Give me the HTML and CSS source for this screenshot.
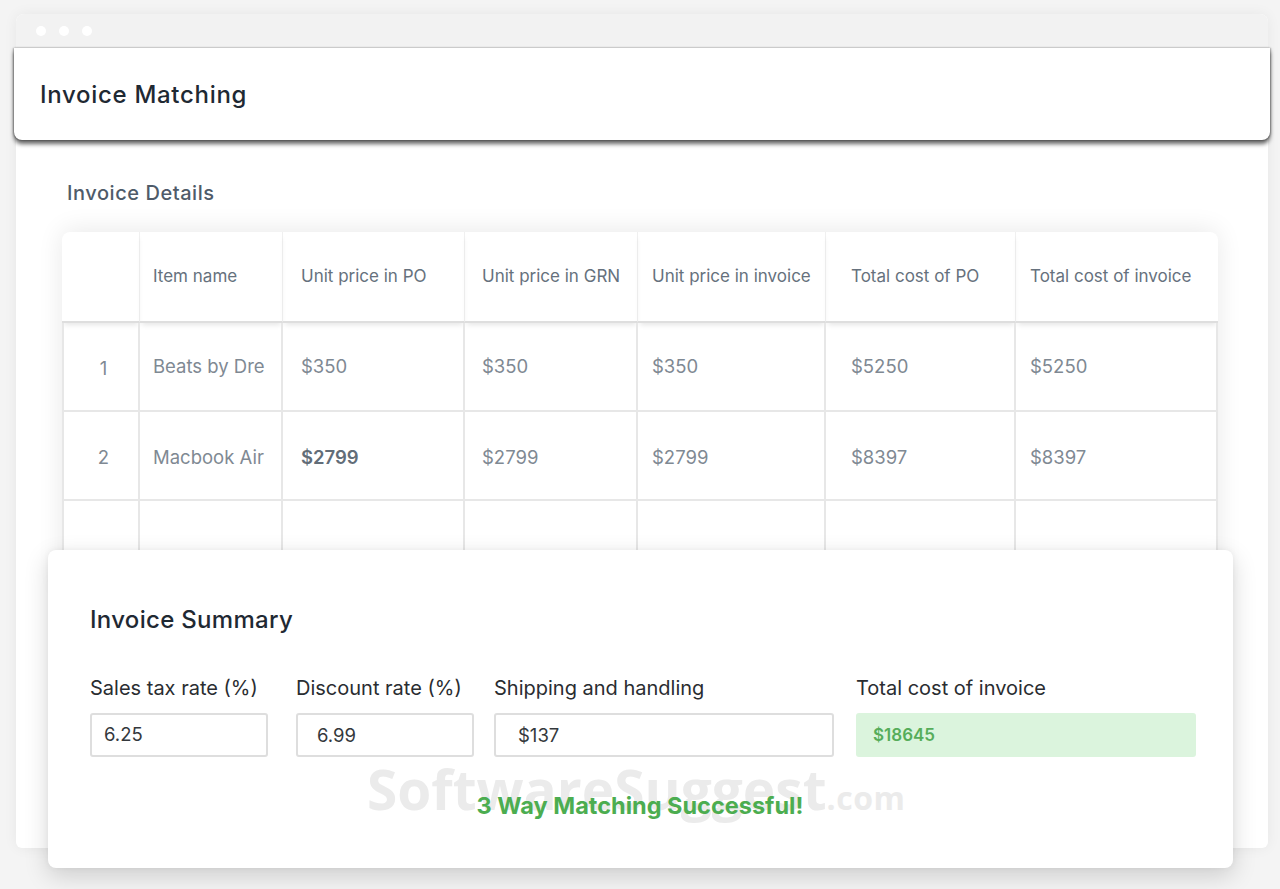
FILE: index.html
```html
<!DOCTYPE html>
<html lang="en">
<head>
<meta charset="utf-8">
<title>Invoice Matching</title>
<link rel="stylesheet" href="styles.css">
</head>
<body>
<div class="window">
  <div class="titlebar">
    <span class="dot"></span><span class="dot"></span><span class="dot"></span>
  </div>
  <header class="app-header">
    <h1 class="app-title">Invoice Matching</h1>
  </header>
  <main class="content">
    <h2 class="section-title">Invoice Details</h2>
    <div class="table-card">
      <table class="items">
        <colgroup>
          <col class="c-num"><col class="c-name"><col class="c-po"><col class="c-grn"><col class="c-inv"><col class="c-tpo"><col class="c-tinv">
        </colgroup>
        <thead>
          <tr>
            <th></th>
            <th>Item name</th>
            <th>Unit price in PO</th>
            <th>Unit price in GRN</th>
            <th>Unit price in invoice</th>
            <th>Total cost of PO</th>
            <th>Total cost of invoice</th>
          </tr>
        </thead>
        <tbody>
          <tr>
            <td>1</td>
            <td>Beats by Dre</td>
            <td>$350</td>
            <td>$350</td>
            <td>$350</td>
            <td>$5250</td>
            <td>$5250</td>
          </tr>
          <tr>
            <td>2</td>
            <td>Macbook Air</td>
            <td class="strong">$2799</td>
            <td>$2799</td>
            <td>$2799</td>
            <td>$8397</td>
            <td>$8397</td>
          </tr>
          <tr>
            <td></td><td></td><td></td><td></td><td></td><td></td><td></td>
          </tr>
        </tbody>
      </table>
    </div>
    <section class="summary-card">
      <h2 class="summary-title">Invoice Summary</h2>
      <div class="fields">
        <div class="field">
          <div class="field-label">Sales tax rate (%)</div>
          <div class="field-box box-tax">6.25</div>
        </div>
        <div class="field">
          <div class="field-label">Discount rate (%)</div>
          <div class="field-box box-disc">6.99</div>
        </div>
        <div class="field">
          <div class="field-label">Shipping and handling</div>
          <div class="field-box box-ship">$137</div>
        </div>
        <div class="field">
          <div class="field-label">Total cost of invoice</div>
          <div class="field-box box-total">$18645</div>
        </div>
      </div>
      <p class="success">3 Way Matching Successful!</p>
      <div class="watermark" aria-hidden="true">SoftwareSuggest<span class="wm-com">.com</span></div>
    </section>
  </main>
</div>
</body>
</html>
```

FILE: styles.css
```css
* { box-sizing: border-box; }

html, body {
  margin: 0;
  padding: 0;
}

body {
  background: #f4f4f4;
  font-family: Inter, "Noto Sans", "Liberation Sans", sans-serif;
  padding-top: 14px;
  height: 889px;
  overflow: hidden;
}

.window {
  display: flow-root;
  margin: 0 12px 0 16px;
  background: #ffffff;
  border-radius: 8px 8px 6px 6px;
  box-shadow: 0 0 14px rgba(0,0,0,0.06);
}

.titlebar {
  height: 34px;
  background: #f2f2f2;
  border-radius: 8px 8px 0 0;
  display: flex;
  align-items: center;
  gap: 13px;
  padding-left: 20px;
}

.dot {
  width: 10px;
  height: 10px;
  border-radius: 50%;
  background: #ffffff;
}

.app-header {
  position: relative;
  z-index: 2;
  margin: 0 -2px;
  height: 92px;
  background: #ffffff;
  border-radius: 0 0 8px 8px;
  box-shadow: 0 4px 4px rgba(0,0,0,0.6), -1px 0 2px rgba(0,0,0,0.3), 1px 0 2px rgba(0,0,0,0.3);
  display: flex;
  align-items: center;
  padding-left: 26px;
}

.app-title {
  margin: 0;
  font-size: 24px;
  font-weight: 500;
  color: #1f2933;
  letter-spacing: 0.7px;
}

.content {
  padding: 0;
}

.section-title {
  margin: 41px 0 27px 51px;
  font-size: 20px;
  line-height: 24px;
  font-weight: 500;
  color: #4f5b69;
  letter-spacing: 0.55px;
}

.table-card {
  margin: 0 50px 0 46px;
  background: #ffffff;
  border-radius: 8px 8px 0 0;
  box-shadow: 0 -2px 26px rgba(0,0,0,0.09);
  overflow: hidden;
}

.items {
  width: 100%;
  table-layout: fixed;
  border-collapse: separate;
  border-spacing: 0;
}

.c-num { width: 78px; }
.c-name { width: 143px; }
.c-po { width: 182px; }
.c-grn { width: 173px; }
.c-inv { width: 188px; }
.c-tpo { width: 190px; }
.c-tinv { width: 202px; }

.items th {
  height: 91px;
  text-align: left;
  font-weight: 400;
  font-size: 17px;
  color: #66717d;
  border-right: 1px solid #f0f0f0;
  border-bottom: 2px solid #dedede;
  box-shadow: 0 4px 5px -2px rgba(0,0,0,0.10);
  white-space: nowrap;
  vertical-align: middle;
  padding-top: 0;
}

.items th:last-child { border-right: none; }

.items td {
  height: 89px;
  font-size: 18.5px;
  color: #7f8993;
  border-right: 2px solid #e7e7e7;
  border-bottom: 2px solid #e7e7e7;
  white-space: nowrap;
  vertical-align: middle;
}

.items td:first-child {
  border-left: 2px solid #e7e7e7;
  text-align: center;
  padding-left: 6px;
  padding-top: 4px;
}

.items th:nth-child(2), .items td:nth-child(2) { padding-left: 13px; }
.items th:nth-child(3), .items td:nth-child(3) { padding-left: 18px; }
.items th:nth-child(4), .items td:nth-child(4) { padding-left: 17px; }
.items th:nth-child(5), .items td:nth-child(5) { padding-left: 14px; }
.items th:nth-child(6), .items td:nth-child(6) { padding-left: 25px; }
.items th:nth-child(7), .items td:nth-child(7) { padding-left: 14px; }

.items tbody tr:first-child td { padding-bottom: 2px; }
.items tbody tr:nth-child(2) td { padding-top: 4px; }

.items td.strong {
  font-weight: 600;
  color: #626d78;
  padding-top: 0;
  padding-bottom: 2px;
}

.summary-card {
  position: relative;
  z-index: 3;
  margin: -40px 35px -20px 32px;
  background: #ffffff;
  border-radius: 8px;
  box-shadow: 0 8px 24px rgba(0,0,0,0.16), 0 0 6px rgba(0,0,0,0.05);
  padding: 55px 37px 48px 42px;
}

.summary-title {
  margin: 0;
  font-size: 24px;
  line-height: 30px;
  font-weight: 500;
  color: #1f2933;
  letter-spacing: 0.3px;
}

.fields {
  margin-top: 41px;
  display: grid;
  grid-template-columns: 206px 198px 362px 340px;
}

.field-label {
  font-size: 20px;
  line-height: 24px;
  color: #2a2d31;
  white-space: nowrap;
}

.field-box {
  margin-top: 13px;
  height: 44px;
  border: 2px solid #dedede;
  border-radius: 3px;
  display: flex;
  align-items: center;
  font-size: 18.5px;
  color: #34383c;
}

.box-tax { width: 178px; padding-left: 12px; padding-bottom: 3px; }
.box-disc { width: 178px; padding-left: 19px; }
.box-ship { width: 340px; padding-left: 22px; }

.box-total {
  width: 340px;
  border-color: #dbf4dd;
  background: #dbf4dd;
  padding-left: 15px;
  font-size: 17px;
  font-weight: 600;
  color: #56ad5a;
}

.success {
  position: relative;
  z-index: 2;
  margin: 35px 0 0 0;
  text-align: center;
  font-size: 23.5px;
  line-height: 28px;
  font-weight: 700;
  color: #4cad50;
  padding-right: 6px;
}

.watermark {
  position: absolute;
  left: 319px;
  top: 207px;
  z-index: 1;
  font-family: "Open Sans", "Liberation Sans", sans-serif;
  font-size: 55px;
  font-weight: 700;
  letter-spacing: 0;
  color: #ebebeb;
  white-space: nowrap;
  line-height: 64px;
}

.wm-com {
  font-size: 32px;
  letter-spacing: 0.5px;
}
```
